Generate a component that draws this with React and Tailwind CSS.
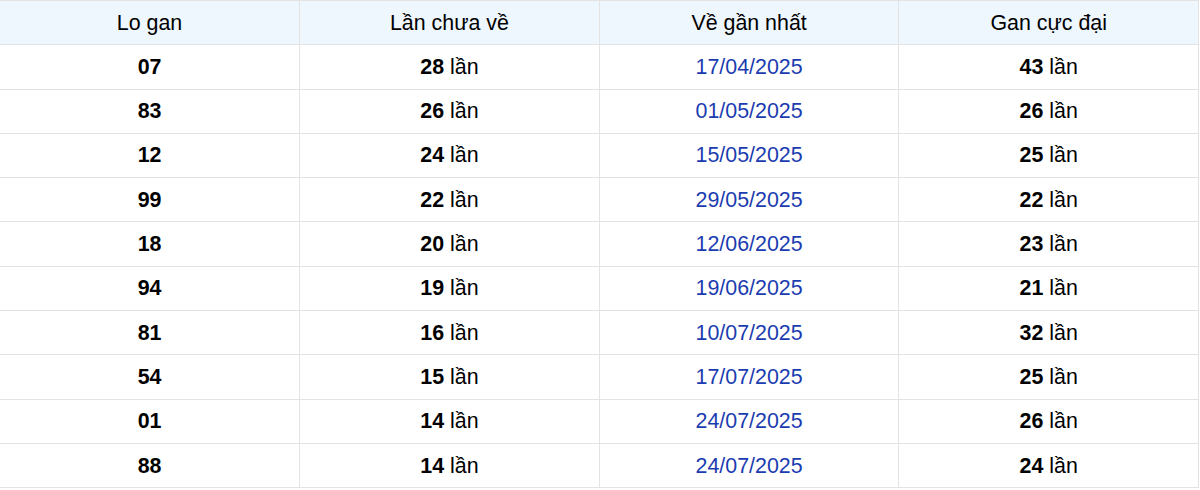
import React from 'react';

const rows = [
  ['07', '28', '17/04/2025', '43'],
  ['83', '26', '01/05/2025', '26'],
  ['12', '24', '15/05/2025', '25'],
  ['99', '22', '29/05/2025', '22'],
  ['18', '20', '12/06/2025', '23'],
  ['94', '19', '19/06/2025', '21'],
  ['81', '16', '10/07/2025', '32'],
  ['54', '15', '17/07/2025', '25'],
  ['01', '14', '24/07/2025', '26'],
  ['88', '14', '24/07/2025', '24'],
];

const headers = ['Lo gan', 'Lần chưa về', 'Về gần nhất', 'Gan cực đại'];

export default function App() {
  return (
    <div className="w-[1200px] h-[490px] bg-white overflow-hidden" style={{ fontFamily: '"Liberation Sans", Arial, sans-serif' }}>
      <table className="w-[1199px] border-collapse table-fixed text-[21.4px] text-black">
        <thead>
          <tr className="h-[44.3px] bg-[#eef6fe]">
            {headers.map((h) => (
              <th key={h} className="border-y border-r border-[#e3e3e3] font-normal text-center p-0 w-1/4">
                {h}
              </th>
            ))}
          </tr>
        </thead>
        <tbody>
          {rows.map(([lo, chua, ve, gan], i) => (
            <tr key={i} className="h-[44.3px]">
              <td className="border-y border-r border-[#e3e3e3] text-center p-0 font-bold">{lo}</td>
              <td className="border-y border-r border-[#e3e3e3] text-center p-0">
                <span className="font-bold">{chua}</span> lần
              </td>
              <td className="border-y border-r border-[#e3e3e3] text-center p-0 text-[#1b3cb0]">{ve}</td>
              <td className="border-y border-r border-[#e3e3e3] text-center p-0">
                <span className="font-bold">{gan}</span> lần
              </td>
            </tr>
          ))}
        </tbody>
      </table>
    </div>
  );
}
